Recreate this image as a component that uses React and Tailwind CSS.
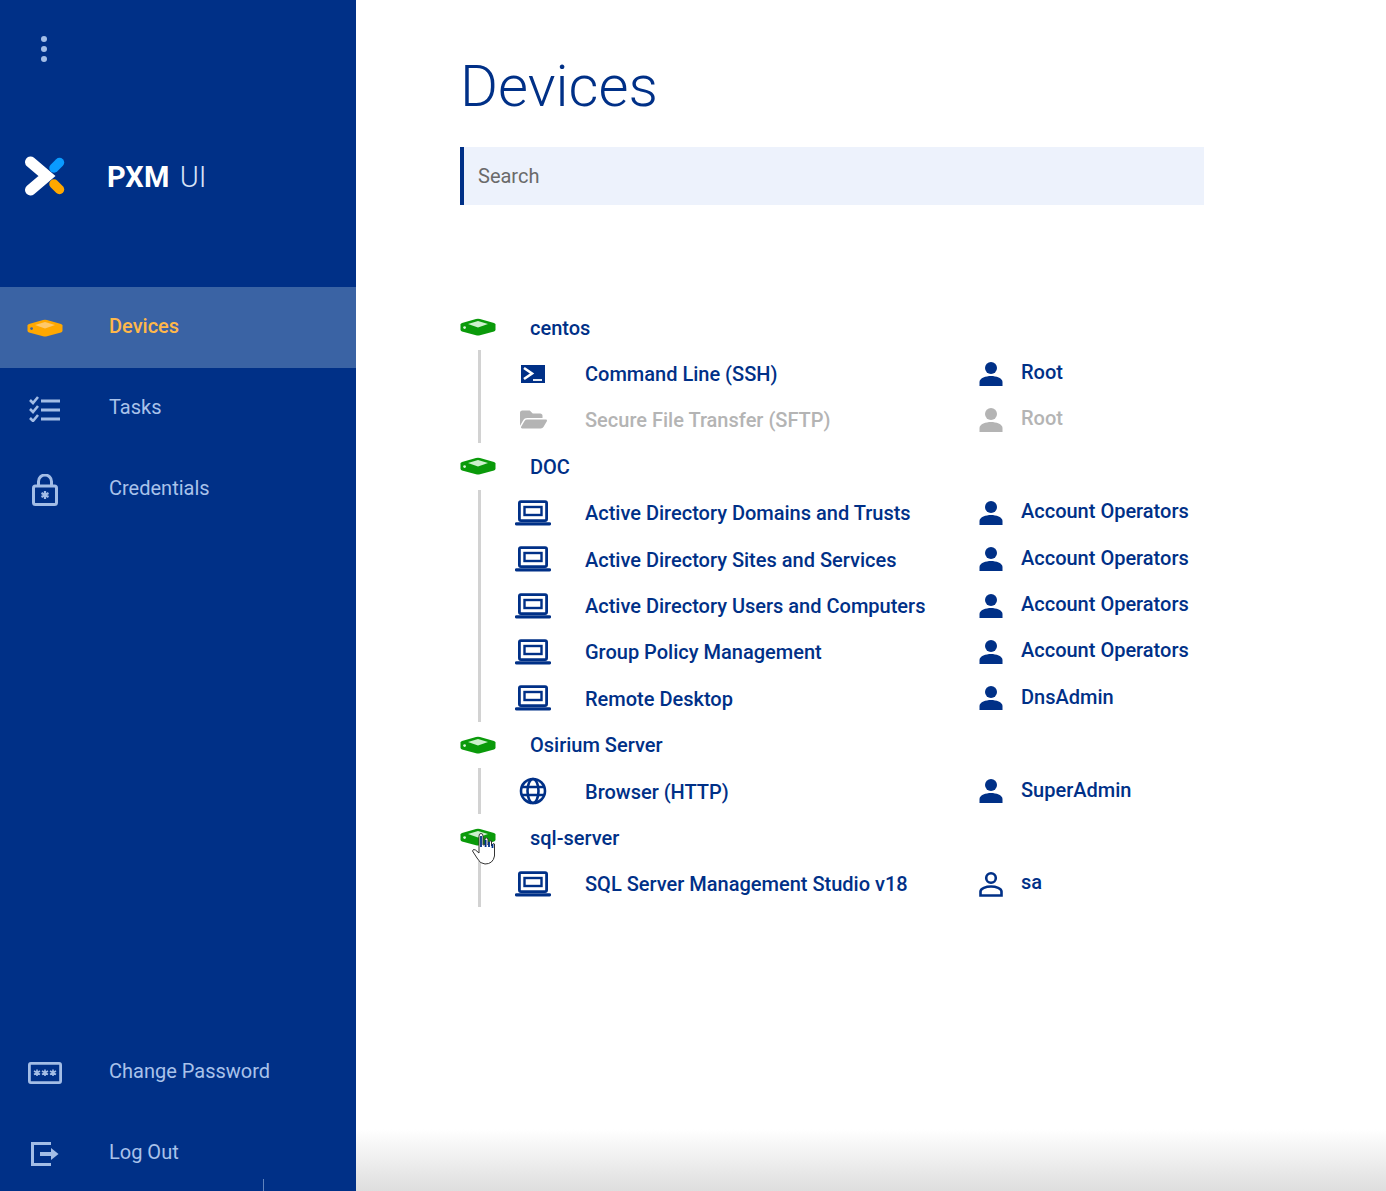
import React from "react";
import { FaFolderOpen } from "react-icons/fa";

const NAVY = "#003087";

function DeviceIcon({ color = "#0a9a0a", accent = "#cdf0cd", dot = "#d8f5d8" }) {
  return (
    <svg width="36" height="18" viewBox="0 0 36 18" className="block">
      <path d="M0.5 6.5 Q0.5 5.5 2 5 L16 1 Q18 0.5 20 1 L34 5 Q35.5 5.5 35.5 6.5 V11.5 Q35.5 13 34 13.5 L20 17.3 Q18 17.8 16 17.3 L2 13.5 Q0.5 13 0.5 11.5 Z" fill={color} />
      <path d="M8 6 L18 3 L28 6 L18 9.4 Z" fill={accent} />
      <circle cx="4.6" cy="9.6" r="1.4" fill={dot} />
    </svg>
  );
}

function LaptopIcon() {
  return (
    <svg width="36" height="26" viewBox="0 0 36 26" className="block" fill="none" stroke={NAVY}>
      <rect x="4.4" y="1.6" width="27.2" height="19" rx="1.5" strokeWidth="2.8" />
      <rect x="9.5" y="7" width="17" height="8" strokeWidth="2.4" />
      <path d="M1.5 23.8 H34.5" strokeWidth="3.2" strokeLinecap="round" />
    </svg>
  );
}

function TerminalIcon() {
  return (
    <svg width="24" height="18" viewBox="0 0 24 18" className="block">
      <rect width="24" height="18" fill={NAVY} />
      <path d="M3 3 L11 8.5 L3 14" fill="none" stroke="#fff" strokeWidth="2.6" />
      <path d="M12 15 H21" stroke="#fff" strokeWidth="1.8" />
    </svg>
  );
}

function GlobeIcon() {
  return (
    <svg width="28" height="28" viewBox="0 0 28 28" className="block" fill="none" stroke={NAVY} strokeWidth="2.6">
      <circle cx="14" cy="14" r="12" />
      <ellipse cx="14" cy="14" rx="5.5" ry="12" />
      <path d="M2.8 10 H25.2 M2.8 18 H25.2" />
    </svg>
  );
}

function UserIcon({ color = NAVY, outline = false }) {
  if (outline) {
    return (
      <svg width="26" height="26" viewBox="0 0 26 26" className="block" fill="none" stroke={color} strokeWidth="2.6">
        <circle cx="13" cy="7" r="4.8" />
        <path d="M2.5 24.5 V20.5 C2.5 17.5 8 15.5 13 15.5 C18 15.5 23.5 17.5 23.5 20.5 V24.5 Z" />
      </svg>
    );
  }
  return (
    <svg width="26" height="26" viewBox="0 0 26 26" className="block" fill={color}>
      <circle cx="13" cy="7" r="6" />
      <path d="M1.5 25 V21 C1.5 17 8 15 13 15 C18 15 24.5 17 24.5 21 V25 Z" />
    </svg>
  );
}

const navIcon = "#a3bde6";

function TasksIcon() {
  return (
    <svg width="32" height="26" viewBox="0 0 32 26" className="block" fill="none" stroke={navIcon}>
      <path d="M1 4 L4 7 L9 1 M1 13 L4 16 L9 10 M1 22 L4 25 L9 19" strokeWidth="2.6" />
      <path d="M12 5 H31 M12 14 H31 M12 23 H31" strokeWidth="3" />
    </svg>
  );
}

function LockIcon() {
  return (
    <svg width="26" height="32" viewBox="0 0 26 32" className="block" fill="none" stroke={navIcon}>
      <rect x="1.5" y="12" width="23" height="18.5" rx="2" strokeWidth="3" />
      <path d="M6.5 12 V7.5 A6.5 6.5 0 0 1 19.5 7.5 V12" strokeWidth="3" />
      <path d="M13 17 V25 M9.5 19 L16.5 23 M16.5 19 L9.5 23" strokeWidth="2.2" />
    </svg>
  );
}

function PasswordIcon() {
  return (
    <svg width="34" height="22" viewBox="0 0 34 22" className="block" fill="none" stroke={navIcon}>
      <rect x="1.4" y="1.4" width="31.2" height="19.2" rx="1.5" strokeWidth="2.8" />
      <path d="M9 7.5 V14 M6 9 L12 12.5 M12 9 L6 12.5 M17 7.5 V14 M14 9 L20 12.5 M20 9 L14 12.5 M25 7.5 V14 M22 9 L28 12.5 M28 9 L22 12.5" strokeWidth="1.6" />
    </svg>
  );
}

function LogoutIcon() {
  return (
    <svg width="28" height="24" viewBox="0 0 28 24" className="block" fill="none" stroke={navIcon}>
      <path d="M20 1.5 H1.5 V22.5 H20" strokeWidth="3" />
      <path d="M9 12 H22" strokeWidth="4" />
      <path d="M20 6 L27.5 12 L20 18 Z" fill={navIcon} stroke="none" />
    </svg>
  );
}

function Logo() {
  return (
    <svg width="42" height="42" viewBox="0 0 42 42" className="block" fill="none" strokeLinecap="round">
      <path d="M6.5 7 L23 21 L6.5 35" stroke="#fff" strokeWidth="11" strokeLinejoin="miter" />
      <path d="M30 13 L35.5 7.5" stroke="#0a9bff" strokeWidth="9.5" />
      <path d="M30 29 L35.5 34.5" stroke="#ffa800" strokeWidth="9.5" />
    </svg>
  );
}

function NavItem({ icon, label, active }) {
  return (
    <div className={`flex h-[81px] items-center ${active ? "bg-[#3a63a4]" : ""}`}>
      <div className="flex w-[90px] shrink-0 justify-center">{icon}</div>
      <span className={`pb-[3px] pl-[19px] text-[20px] ${active ? "font-medium text-[#ffb84a]" : "text-[#a9c2ea]"}`}>{label}</span>
    </div>
  );
}

function Group({ name, children }) {
  return (
    <div>
      <div className="flex h-[46.4px] items-center">
        <div className="w-[70px] shrink-0"><DeviceIcon /></div>
        <span className="pt-[1px] text-[20px] font-medium text-[#003087]">{name}</span>
      </div>
      <div className="ml-[18px] border-l-[3px] border-[#d2d2d2]">{children}</div>
    </div>
  );
}

function Row({ icon, label, user, muted, outline }) {
  const text = muted ? "text-[#b4b4b4]" : "text-[#003087]";
  return (
    <div className={`flex h-[46.4px] items-center text-[20px] font-medium ${text}`}>
      <div className="flex w-[104px] shrink-0 justify-center">{icon}</div>
      <span className="w-[393px] shrink-0 pt-[1px]">{label}</span>
      <div className="w-[26px] shrink-0"><UserIcon color={muted ? "#b4b4b4" : NAVY} outline={outline} /></div>
      <span className="pb-[3px] pl-[17px]">{user}</span>
    </div>
  );
}

export default function App() {
  return (
    <div className="relative flex h-[1191px] overflow-hidden bg-white font-['Roboto',sans-serif]">
      <aside className="flex w-[356px] shrink-0 flex-col bg-[#003087]">
        <div className="flex h-[97px] items-center pl-[41px]">
          <div className="flex flex-col gap-[4px]">
            <span className="size-[6px] rounded-full bg-[#a3bde6]" />
            <span className="size-[6px] rounded-full bg-[#a3bde6]" />
            <span className="size-[6px] rounded-full bg-[#a3bde6]" />
          </div>
        </div>
        <div className="flex h-[190px] items-start pl-[24px] pt-[58px]">
          <Logo />
          <span className="pl-[41px] text-[29px] leading-[44px] text-white">
            <span className="font-bold tracking-[0.3px]">PXM</span>
            <span className="pl-[10px] font-light text-[#d5e2f7]">UI</span>
          </span>
        </div>
        <NavItem active icon={<DeviceIcon color="#ffa800" accent="#ffc869" dot="#3a63a4" />} label="Devices" />
        <NavItem icon={<TasksIcon />} label="Tasks" />
        <NavItem icon={<LockIcon />} label="Credentials" />
        <div className="mb-[-3px] mt-auto">
          <NavItem icon={<PasswordIcon />} label="Change Password" />
          <NavItem icon={<LogoutIcon />} label="Log Out" />
        </div>
      </aside>
      <main className="flex-1 pl-[104px]">
        <h1 className="pt-[54px] text-[58px] font-light leading-[64px] text-[#003087]">Devices</h1>
        <input
          placeholder="Search"
          className="mt-[29px] block h-[58px] w-[744px] border-l-[4px] border-[#003087] bg-[#edf2fc] pl-[14px] text-[20px] outline-none placeholder:text-[#6a6a6a]"
        />
        <div className="mt-[99px]">
          <Group name="centos">
            <Row icon={<TerminalIcon />} label="Command Line (SSH)" user="Root" />
            <Row muted icon={<FaFolderOpen size={27} color="#b4b4b4" />} label="Secure File Transfer (SFTP)" user="Root" />
          </Group>
          <Group name="DOC">
            <Row icon={<LaptopIcon />} label="Active Directory Domains and Trusts" user="Account Operators" />
            <Row icon={<LaptopIcon />} label="Active Directory Sites and Services" user="Account Operators" />
            <Row icon={<LaptopIcon />} label="Active Directory Users and Computers" user="Account Operators" />
            <Row icon={<LaptopIcon />} label="Group Policy Management" user="Account Operators" />
            <Row icon={<LaptopIcon />} label="Remote Desktop" user="DnsAdmin" />
          </Group>
          <Group name="Osirium Server">
            <Row icon={<GlobeIcon />} label="Browser (HTTP)" user="SuperAdmin" />
          </Group>
          <Group name="sql-server">
            <Row icon={<LaptopIcon />} label="SQL Server Management Studio v18" user="sa" outline />
          </Group>
        </div>
      </main>
      <svg width="26" height="34" viewBox="0 0 26 34" className="absolute left-[471px] top-[832px]" fill="none">
        <path d="M8 4 Q8 1.5 10 1.5 Q12 1.5 12 4 V13 L14 12.5 V6.5 Q16 5 17 7 V13 Q19 7.5 20.5 9 V14 Q22.5 10 23.5 12 V24 Q22 32 14 32 Q9 32 6 26 L1.5 19 Q2 16.5 4.5 18 L8 21 Z" fill="#fff" stroke="#333" strokeWidth="1" />
        <path d="M10 4 V15 M14.6 8 V15 M18 10 V15 M21.5 12 V16" stroke={NAVY} strokeWidth="1.8" />
      </svg>
      <div className="absolute bottom-0 left-[356px] right-0 h-[62px] bg-gradient-to-b from-transparent to-[#dedede]" />
      <div className="absolute bottom-0 left-[263px] h-[12px] w-px bg-[#5f83bd]" />
    </div>
  );
}
